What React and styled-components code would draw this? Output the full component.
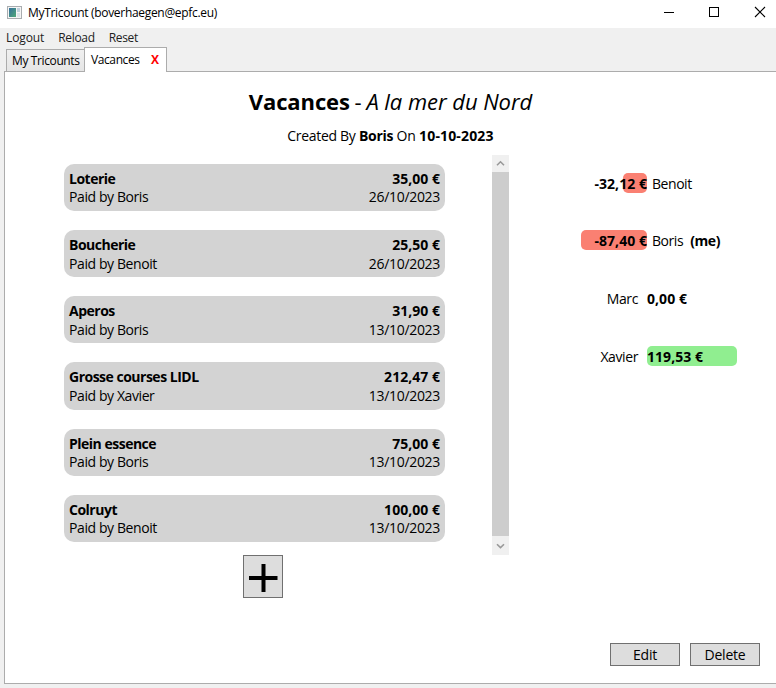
import React from 'react';
import styled, { createGlobalStyle } from 'styled-components';

const Global = createGlobalStyle`
  * { box-sizing: border-box; }
  body { margin: 0; background: #fff; overflow: hidden; }
  button { padding: 0; margin: 0; font: inherit; color: inherit; }
`;

const Window = styled.div`
  width: 776px;
  height: 688px;
  display: flex;
  flex-direction: column;
  background: #f0f0f0;
  color: #000;
  font: 14px/18px "Open Sans", "Noto Sans", sans-serif;
  white-space: nowrap;
  overflow: hidden;
`;

const Label = styled.span`
  font-weight: ${p => (p.$bold ? 700 : 400)};
  letter-spacing: ${p => p.$ls || 0}px;
`;

const TitleBar = styled.header`
  height: 28px;
  flex: none;
  display: flex;
  align-items: center;
  padding: 0 10px 5px 7px;
  background: #fff;
  font-size: 12px;
`;
const AppIcon = styled.svg`
  margin-top: 2px;
`;
const Caption = styled.span`
  flex: 1;
  margin: 3px 0 0 6px;
  letter-spacing: -0.31px;
`;
const WindowControls = styled.div`
  display: flex;
  gap: 34px;
  svg { display: block; }
`;

const MenuBar = styled.nav`
  height: 19px;
  flex: none;
  display: flex;
  gap: 14px;
  padding: 1px 6px 0;
  font-size: 12px;
  color: #212121;
`;

const Tabs = styled.div`
  height: 25px;
  flex: none;
  display: flex;
  align-items: flex-end;
  padding-left: 6px;
  font-size: 12px;
  position: relative;
  z-index: 1;
`;
const Tab = styled.div`
  display: flex;
  justify-content: space-between;
  width: ${p => (p.$active ? 83 : 78)}px;
  height: ${p => (p.$active ? 25 : 22)}px;
  margin-bottom: ${p => (p.$active ? 0 : 1)}px;
  padding: ${p => (p.$active ? '3px 7px 0 6px' : '2px 4px 0 5px')};
  border: 1px solid #acacac;
  border-bottom: 0;
  border-right-width: ${p => (p.$active ? 1 : 0)}px;
  background: ${p => (p.$active ? '#fff' : 'linear-gradient(#f0f0f0, #e5e5e5)')};
`;
const CloseTab = styled.span`
  color: #f00;
  font-weight: 700;
`;

const Page = styled.main`
  width: 776px;
  height: 613px;
  flex: none;
  margin: -1px 0 0 4px;
  padding-right: 4px;
  border: 1px solid #acacac;
  border-right: 0;
  background: #fff;
  display: flex;
  flex-direction: column;
`;
const Heading = styled.h1`
  margin: 13px 0 0;
  text-align: center;
  font-size: 22px;
  line-height: 32px;
  font-weight: 400;
  word-spacing: -1px;
  em { letter-spacing: ${p => p.$ls}px; word-spacing: 0; }
`;
const Created = styled.p`
  margin: 10px 0 0;
  text-align: center;
`;

const Content = styled.div`
  display: grid;
  grid-template-columns: 504px 1fr;
  margin-top: 10px;
  height: 400px;
`;
const ListArea = styled.section`
  display: flex;
  justify-content: space-between;
  padding-left: 59px;
`;
const CardList = styled.div`
  width: 381px;
  padding-top: 9px;
  display: flex;
  flex-direction: column;
  gap: 18.95px;
`;
const Card = styled.article`
  height: 47.2px;
  flex: none;
  padding: 6px 5px 0;
  border-radius: 10px;
  background: #d3d3d3;
`;
const CardLine = styled.div`
  height: 18.4px;
  display: flex;
  justify-content: space-between;
`;
const ScrollBar = styled.div`
  width: 17px;
  display: flex;
  flex-direction: column;
  background: #f0f0f0;
`;
const ScrollButton = styled.div`
  height: ${p => p.$h}px;
  display: flex;
  align-items: center;
  justify-content: center;
`;
const Thumb = styled.div`
  flex: 1;
  background: #cdcdcd;
`;

const Balances = styled.section`
  padding-top: 17.9px;
`;
const BalanceRow = styled.div`
  height: 57.55px;
  display: grid;
  grid-template-columns: 138px 1fr;
  line-height: 21px;
`;
const Side = styled.div`
  height: 20px;
  display: flex;
  justify-content: ${p => (p.$end ? 'flex-end' : 'flex-start')};
  padding: ${p => p.$pad || 0};
`;
const Bar = styled.div`
  width: ${p => p.$w}px;
  height: 20px;
  display: flex;
  justify-content: ${p => (p.$end ? 'flex-end' : 'flex-start')};
  border-radius: 5px;
  background: ${p => p.$c};
`;
const Me = styled(Label)`
  margin-left: 7px;
`;

const AddButton = styled.button`
  width: 40px;
  height: 43px;
  flex: none;
  margin-left: 238px;
  border: 1px solid #707070;
  background: #ddd;
  display: flex;
  align-items: center;
  justify-content: center;
`;
const Actions = styled.footer`
  display: flex;
  justify-content: flex-end;
  gap: 10px;
  margin: 45px 16px 0 0;
`;
const ActionButton = styled.button`
  width: 70px;
  height: 23px;
  border: 1px solid #707070;
  background: #ddd;
  line-height: 22px;
  letter-spacing: -0.2px;
`;

const expenses = [
  ['Loterie', '35,00 €', 'Boris', '26/10/2023'],
  ['Boucherie', '25,50 €', 'Benoit', '26/10/2023'],
  ['Aperos', '31,90 €', 'Boris', '13/10/2023'],
  ['Grosse courses LIDL', '212,47 €', 'Xavier', '13/10/2023'],
  ['Plein essence', '75,00 €', 'Boris', '13/10/2023'],
  ['Colruyt', '100,00 €', 'Benoit', '13/10/2023'],
];
const balances = [
  { name: 'Benoit', amount: '-32,12 €', width: 24, debt: true },
  { name: 'Boris', amount: '-87,40 €', width: 66, debt: true, me: true },
  { name: 'Marc', amount: '0,00 €', width: 40 },
  { name: 'Xavier', amount: '119,53 €', width: 90, credit: true },
];

function Balance({ name, amount, width, debt, credit, me }) {
  const bar = (
    <Bar $w={width} $end={debt} $c={debt ? '#fa8072' : credit ? '#90ee90' : 'transparent'}>
      <Label $bold $ls={0.05}>{amount}</Label>
    </Bar>
  );
  return (
    <BalanceRow>
      <Side $end $pad={debt ? '0' : '0 9px 0 0'}>{debt ? bar : <Label $ls={-0.4}>{name}</Label>}</Side>
      <Side $pad={debt ? '0 0 0 5px' : '0'}>
        {debt ? <Label $ls={-0.45}>{name}</Label> : bar}
        {me && <Me $bold $ls={-0.4}>(me)</Me>}
      </Side>
    </BalanceRow>
  );
}

export default function App() {
  return (
    <Window>
      <Global />
      <TitleBar>
        <AppIcon width="15" height="13" viewBox="0 0 15 13">
          <defs>
            <linearGradient id="pane" x1="0" y1="0" x2="1" y2="1">
              <stop offset="0" stopColor="#356f9c" />
              <stop offset="1" stopColor="#4fa978" />
            </linearGradient>
          </defs>
          <rect x=".5" y=".5" width="14" height="12" fill="#f5f5f5" stroke="#a9adb0" />
          <rect x="2" y="2" width="7" height="9" fill="url(#pane)" />
          <rect x="10" y="2" width="3" height="4" fill="#bfd0dc" />
          <rect x="10" y="7" width="3" height="4" fill="#dce5e9" />
        </AppIcon>
        <Caption>MyTricount (boverhaegen@epfc.eu)</Caption>
        <WindowControls>
          <svg width="12" height="12"><path d="M2 6.5h10" stroke="#000" /></svg>
          <svg width="12" height="12"><rect x="1.5" y="1.5" width="9" height="9" fill="none" stroke="#000" /></svg>
          <svg width="12" height="12"><path d="M1 1l10 10M11 1L1 11" stroke="#000" strokeWidth="1.1" /></svg>
        </WindowControls>
      </TitleBar>
      <MenuBar>
        <Label $ls={-0.12}>Logout</Label>
        <Label $ls={-0.3}>Reload</Label>
        <Label $ls={-0.35}>Reset</Label>
      </MenuBar>
      <Tabs>
        <Tab><Label $ls={-0.38}>My Tricounts</Label></Tab>
        <Tab $active><Label $ls={-0.4}>Vacances</Label><CloseTab>X</CloseTab></Tab>
      </Tabs>
      <Page>
        <Heading $ls={-0.05}><Label $bold $ls={-0.1}>Vacances</Label> - <em>A la mer du Nord</em></Heading>
        <Created>
          <Label $ls={-0.3}>Created By </Label><Label $bold $ls={-0.3}>Boris</Label>
          <Label $ls={-0.2}> On </Label><Label $bold $ls={0.16}>10-10-2023</Label>
        </Created>
        <Content>
          <ListArea>
            <CardList>
              {expenses.map(([title, amount, payer, date]) => (
                <Card key={title}>
                  <CardLine><Label $bold $ls={-0.5}>{title}</Label><Label $bold $ls={0.03}>{amount}</Label></CardLine>
                  <CardLine><Label $ls={-0.41}>Paid by {payer}</Label><Label $ls={-0.31}>{date}</Label></CardLine>
                </Card>
              ))}
            </CardList>
            <ScrollBar>
              <ScrollButton $h={17}>
                <svg width="9" height="7" viewBox="0 0 9 7"><path d="M1 5.2l3.5-3.4L8 5.2" fill="none" stroke="#999" strokeWidth="1.6" /></svg>
              </ScrollButton>
              <Thumb />
              <ScrollButton $h={19}>
                <svg width="9" height="7" viewBox="0 0 9 7"><path d="M1 2.2l3.5 3.4L8 2.2" fill="none" stroke="#999" strokeWidth="1.6" /></svg>
              </ScrollButton>
            </ScrollBar>
          </ListArea>
          <Balances>{balances.map(b => <Balance key={b.name} {...b} />)}</Balances>
        </Content>
        <AddButton aria-label="Add expense">
          <svg width="38" height="41" viewBox="0 0 38 41"><path d="M5 22h28.5M19.5 8v28" stroke="#000" strokeWidth="4" /></svg>
        </AddButton>
        <Actions>
          <ActionButton>Edit</ActionButton>
          <ActionButton>Delete</ActionButton>
        </Actions>
      </Page>
    </Window>
  );
}
